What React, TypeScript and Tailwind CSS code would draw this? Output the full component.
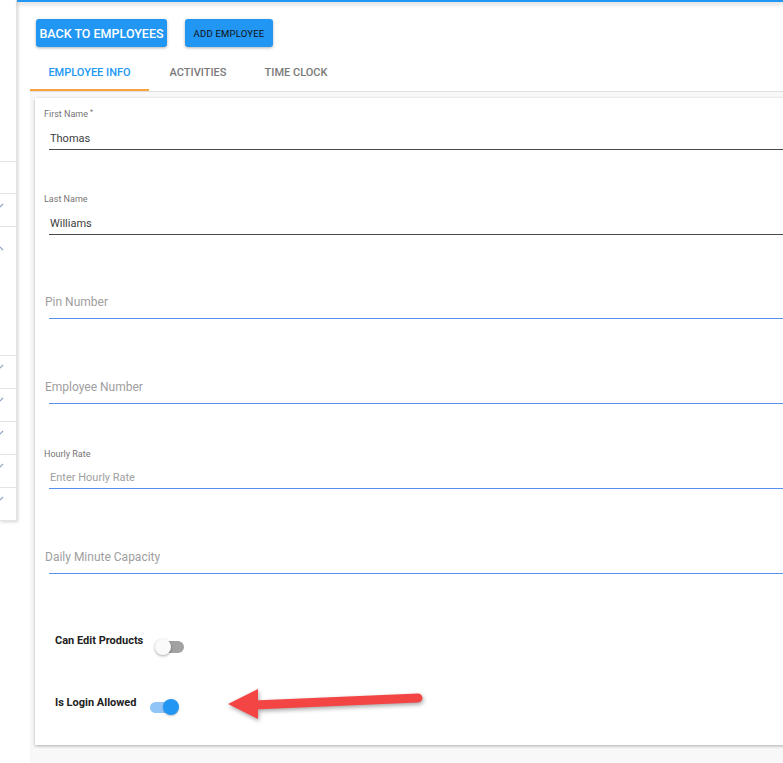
import React from "react";

function Chevron({ up = false }: { up?: boolean }) {
  return (
    <svg width="8" height="6" viewBox="0 0 8 6" className="-ml-[4px]">
      <polyline
        points={up ? "1,5 4,2 7,5" : "1,1 4,4 7,1"}
        fill="none"
        stroke="#8aa2c2"
        strokeWidth="1.2"
      />
    </svg>
  );
}

function Sidebar() {
  return (
    <aside className="flex h-[521px] w-[17px] flex-none flex-col border-r border-[#e3e3e3] bg-white shadow-[1px_1px_3px_rgba(0,0,0,0.18)]">
      <div className="h-[162px] border-b border-[#e3e3e3]" />
      <div className="h-[32px] border-b border-[#e3e3e3]" />
      <div className="h-[33px] border-b border-[#e3e3e3] pt-[9px]">
        <Chevron />
      </div>
      <div className="h-[129px] border-b border-[#e3e3e3] pt-[18px]">
        <Chevron up />
      </div>
      {[0, 1, 2, 3, 4].map((i) => (
        <div key={i} className="h-[33px] border-b border-[#e3e3e3] pt-[8px]">
          <Chevron />
        </div>
      ))}
    </aside>
  );
}

function LabeledField({
  label,
  value,
  required,
  placeholder,
  className = "",
}: {
  label: string;
  value?: string;
  required?: boolean;
  placeholder?: boolean;
  className?: string;
}) {
  return (
    <div className={"pl-[9px] " + className}>
      <div className="h-[12px] text-[9px] leading-[12px] text-[#757575]">
        {label}
        {required && <span className="relative -top-[3px] ml-[2px] text-[7px]">*</span>}
      </div>
      <div
        className={
          "ml-[5px] pb-[3px] pl-[1px] text-[11px] leading-[14px] " +
          (placeholder
            ? "mt-[11px] border-b border-[#5a8fee] text-[#a0a0a0]"
            : "mt-[12px] border-b border-[#4a4a4a] text-[#3d3d3d]")
        }
      >
        {value}
      </div>
    </div>
  );
}

function PlaceholderField({ text, className = "" }: { text: string; className?: string }) {
  return (
    <div className={className}>
      <div className="pl-[10px] text-[12px] leading-[16px] text-[#9e9e9e]">{text}</div>
      <div className="ml-[14px] mt-[8px] h-px bg-[#5a8fee]" />
    </div>
  );
}

function Switch({ on }: { on: boolean }) {
  if (on) {
    return (
      <div className="relative h-[16px] w-[28px] flex-none">
        <div className="absolute left-0 top-[3px] h-[11px] w-[24px] rounded-full bg-[#90c6f7]" />
        <div className="absolute left-[13px] top-0 h-[16px] w-[16px] rounded-full bg-[#2196f3] shadow-[0_1px_2px_rgba(0,0,0,0.25)]" />
      </div>
    );
  }
  return (
    <div className="relative h-[16px] w-[29px] flex-none">
      <div className="absolute left-[4px] right-0 top-[2px] h-[12px] rounded-full bg-[#a2a2a2]" />
      <div className="absolute left-0 top-0 h-[16px] w-[16px] rounded-full bg-[#fafafa] shadow-[0_1px_3px_rgba(0,0,0,0.35)]" />
    </div>
  );
}

export default function App() {
  return (
    <div className="relative flex h-[763px] w-[783px] overflow-hidden bg-white font-['Roboto','Liberation_Sans',sans-serif]">
      <Sidebar />
      <div className="flex min-w-0 flex-1 flex-col">
        <div className="h-[2px] flex-none bg-[#2196f3] shadow-[0_2px_4px_rgba(0,0,0,0.25)]" />
        <div className="flex flex-1 flex-col pl-[13px]">
          <div className="flex gap-[18px] pl-[6px] pt-[17px]">
            <button className="h-[28px] w-[131px] rounded-[3px] bg-[#2196f3] pt-[2px] text-[12.5px] font-medium text-white shadow-[0_1px_3px_rgba(0,0,0,0.3)]">
              BACK TO EMPLOYEES
            </button>
            <button className="h-[28px] w-[88px] rounded-[3px] bg-[#2196f3] pt-[2px] text-[9.5px] tracking-[0.2px] text-[#111] shadow-[0_1px_3px_rgba(0,0,0,0.3)]">
              ADD EMPLOYEE
            </button>
          </div>
          <div className="mt-[6px] flex h-[39px] border-b border-[#e0e0e0]">
            <div className="flex w-[119px] items-center justify-center border-b-2 border-[#f9a43e] pt-[4px] text-[11px] font-medium text-[#2196f3]">
              EMPLOYEE INFO
            </div>
            <div className="flex w-[98px] items-center justify-center pt-[2px] text-[11px] font-medium text-[#7a7a7a]">
              ACTIVITIES
            </div>
            <div className="flex w-[98px] items-center justify-center pt-[2px] text-[11px] font-medium text-[#7a7a7a]">
              TIME CLOCK
            </div>
          </div>
          <div className="flex-1 bg-[#f8f8f8] pl-[5px] pt-[6px]">
            <div className="w-[780px] bg-white pb-[30px] pt-[10px] shadow-[0_1px_3px_rgba(0,0,0,0.3)]">
              <LabeledField label="First Name" required value="Thomas" />
              <LabeledField label="Last Name" value="Williams" className="mt-[43px]" />
              <PlaceholderField text="Pin Number" className="mt-[59px]" />
              <PlaceholderField text="Employee Number" className="mt-[60px]" />
              <LabeledField label="Hourly Rate" value="Enter Hourly Rate" placeholder className="mt-[44px]" />
              <PlaceholderField text="Daily Minute Capacity" className="mt-[60px]" />
              <div className="mt-[60px] flex h-[20px] items-start pl-[20px]">
                <span className="text-[11px] font-bold leading-[14px] text-[#222]">Can Edit Products</span>
                <div className="ml-[12px] mt-[5px]">
                  <Switch on={false} />
                </div>
              </div>
              <div className="mt-[42px] flex h-[19px] items-start pl-[20px]">
                <span className="text-[11px] font-bold leading-[14px] text-[#222]">Is Login Allowed</span>
                <div className="ml-[13px] mt-[3px]">
                  <Switch on />
                </div>
              </div>
            </div>
          </div>
        </div>
      </div>
      <svg
        className="pointer-events-none absolute left-[220px] top-[680px] drop-shadow-[1px_2px_2px_rgba(0,0,0,0.35)]"
        width="210"
        height="48"
        viewBox="0 0 210 48"
      >
        <line x1="34" y1="25" x2="198" y2="18" stroke="#f44545" strokeWidth="9" strokeLinecap="round" />
        <polygon points="8,24 38,9 38,39" fill="#f44545" />
      </svg>
    </div>
  );
}
